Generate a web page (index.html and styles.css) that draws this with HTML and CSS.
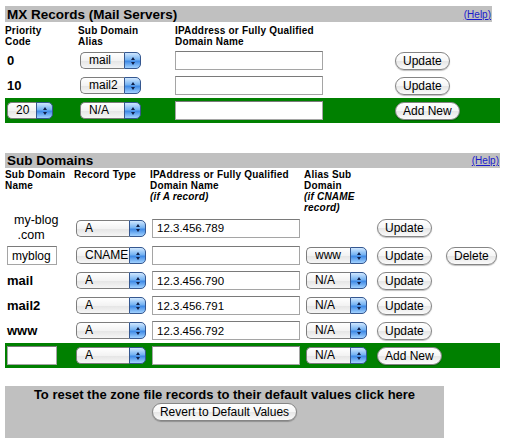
FILE: index.html
```html
<!DOCTYPE html>
<html lang="en">
<head>
    <meta charset="UTF-8">
    <title>Zone File Records</title>
    <link rel="stylesheet" href="styles.css">
</head>
<body>
    <div class="page">
        <div class="bar bar-mx">
            <span class="bar-title">MX Records (Mail Servers)</span>
            <a href="#" class="help">(Help)</a>
        </div>
        <table class="grid mx">
            <colgroup>
                <col class="c-prio"><col class="c-alias"><col class="c-ip"><col class="c-btn">
            </colgroup>
            <tr class="heads">
                <th>Priority<br>Code</th>
                <th>Sub Domain<br>Alias</th>
                <th>IPAddress or Fully Qualified<br>Domain Name</th>
                <th></th>
            </tr>
            <tr>
                <td class="key">0</td>
                <td><span class="sel w61"><select><option>mail</option></select><i class="step"></i></span></td>
                <td><input type="text" class="ip"></td>
                <td><button>Update</button></td>
            </tr>
            <tr>
                <td class="key">10</td>
                <td><span class="sel w61"><select><option>mail2</option></select><i class="step"></i></span></td>
                <td><input type="text" class="ip"></td>
                <td><button>Update</button></td>
            </tr>
            <tr class="new">
                <td><span class="sel w46"><select><option>20</option></select><i class="step"></i></span></td>
                <td><span class="sel w61"><select><option>N/A</option></select><i class="step"></i></span></td>
                <td><input type="text" class="ip"></td>
                <td><button>Add New</button></td>
            </tr>
        </table>

        <div class="bar bar-sub">
            <span class="bar-title">Sub Domains</span>
            <a href="#" class="help">(Help)</a>
        </div>
        <table class="grid sub">
            <colgroup>
                <col class="c-name"><col class="c-type"><col class="c-addr"><col class="c-cname"><col class="c-upd"><col class="c-del">
            </colgroup>
            <tr class="heads">
                <th>Sub Domain<br>Name</th>
                <th>Record Type</th>
                <th>IPAddress or Fully Qualified<br>Domain Name<br><em>(if A record)</em></th>
                <th>Alias Sub<br>Domain<br><em>(if CNAME<br>record)</em></th>
                <th></th>
                <th></th>
            </tr>
            <tr class="tall">
                <td class="host">my-blog<br>&nbsp;.com</td>
                <td><span class="sel w70"><select><option>A</option></select><i class="step"></i></span></td>
                <td><input type="text" class="ip" value="12.3.456.789"></td>
                <td></td>
                <td><button>Update</button></td>
                <td></td>
            </tr>
            <tr>
                <td><input type="text" class="name" value="myblog"></td>
                <td><span class="sel w70"><select><option>CNAME</option></select><i class="step"></i></span></td>
                <td><input type="text" class="ip"></td>
                <td><span class="sel w61"><select><option>www</option></select><i class="step"></i></span></td>
                <td><button>Update</button></td>
                <td><button>Delete</button></td>
            </tr>
            <tr>
                <td class="key">mail</td>
                <td><span class="sel w70"><select><option>A</option></select><i class="step"></i></span></td>
                <td><input type="text" class="ip" value="12.3.456.790"></td>
                <td><span class="sel w61"><select><option>N/A</option></select><i class="step"></i></span></td>
                <td><button>Update</button></td>
                <td></td>
            </tr>
            <tr>
                <td class="key">mail2</td>
                <td><span class="sel w70"><select><option>A</option></select><i class="step"></i></span></td>
                <td><input type="text" class="ip" value="12.3.456.791"></td>
                <td><span class="sel w61"><select><option>N/A</option></select><i class="step"></i></span></td>
                <td><button>Update</button></td>
                <td></td>
            </tr>
            <tr>
                <td class="key">www</td>
                <td><span class="sel w70"><select><option>A</option></select><i class="step"></i></span></td>
                <td><input type="text" class="ip" value="12.3.456.792"></td>
                <td><span class="sel w61"><select><option>N/A</option></select><i class="step"></i></span></td>
                <td><button>Update</button></td>
                <td></td>
            </tr>
            <tr class="new">
                <td><input type="text" class="name"></td>
                <td><span class="sel w70"><select><option>A</option></select><i class="step"></i></span></td>
                <td><input type="text" class="ip"></td>
                <td><span class="sel w61"><select><option>N/A</option></select><i class="step"></i></span></td>
                <td><button>Add New</button></td>
                <td></td>
            </tr>
        </table>

        <div class="reset">
            <p>To reset the zone file records to their default values click here</p>
            <button>Revert to Default Values</button>
        </div>
    </div>
</body>
</html>
```

FILE: styles.css
```css
body {
    margin: 0;
    background: #fff;
    font-family: "Liberation Sans", Arial, sans-serif;
    color: #000;
}

.page {
    padding: 6px 5px 0 5px;
}

/* gray section bars */
.bar {
    display: flex;
    justify-content: space-between;
    align-items: center;
    background-color: #c0c0c0;
    height: 16px;
}

.bar-mx {
    width: 487px;
}

.bar-sub {
    width: 495px;
    margin-top: 30px;
    height: 15px;
}

.bar-title {
    font-size: 13.5px;
    font-weight: bold;
    padding-left: 2px;
    line-height: 15px;
}

.help {
    font-size: 10px;
    color: #1a1acc;
    padding-right: 1px;
}

/* record tables */
.grid {
    border-collapse: collapse;
    table-layout: fixed;
    width: 495px;
}

.grid td,
.grid th {
    padding: 0;
}

.grid td {
    height: 25px;
    vertical-align: middle;
}

.heads th {
    text-align: left;
    vertical-align: top;
    font-size: 10px;
    line-height: 11px;
    letter-spacing: 0.2px;
    font-weight: bold;
    padding-top: 3px;
}

.heads th em {
    font-style: italic;
}

.mx .heads th {
    height: 23px;
}

.sub .heads th {
    height: 44px;
    padding-top: 1px;
}

.c-prio { width: 73px; }
.c-alias { width: 97px; }
.c-ip { width: 220px; }
.c-btn { width: 105px; }

.c-name { width: 69px; }
.c-type { width: 76px; }
.c-addr { width: 154px; }
.c-cname { width: 72px; }
.c-upd { width: 70px; }
.c-del { width: 54px; }

.key {
    font-size: 13px;
    font-weight: bold;
    padding-left: 2px !important;
}

.host {
    font-size: 12.5px;
    line-height: 15px;
    padding-left: 9px !important;
}

.tall td {
    height: 30px;
}

.new td {
    background-color: #008000;
}

/* aqua popup menus */
.sel {
    display: flex;
    height: 17px;
    box-sizing: border-box;
    margin-left: 2px;
}

.w46 { width: 46px; }
.w61 { width: 61px; }
.w70 { width: 70px; }

.sel select {
    -webkit-appearance: none;
    appearance: none;
    flex: 1;
    min-width: 0;
    height: 17px;
    margin: 0;
    padding: 0 0 0 8px;
    border: 1px solid #7d7d7d;
    border-right: none;
    border-radius: 5px 0 0 5px;
    background: linear-gradient(#ffffff, #f3f3f3 50%, #e4e4e4 51%, #f6f6f6);
    font-family: "Liberation Sans", Arial, sans-serif;
    font-size: 12px;
    color: #000;
    line-height: 15px;
}

.step {
    display: flex;
    flex-direction: column;
    align-items: center;
    justify-content: center;
    gap: 2px;
    width: 17px;
    height: 17px;
    box-sizing: border-box;
    border: 1px solid #35578f;
    border-radius: 0 5px 5px 0;
    background: linear-gradient(#cfe7ff, #74b2f2 45%, #3f8ae6 55%, #a2d2ff);
}

.step::before,
.step::after {
    content: "";
    width: 0;
    height: 0;
    border-left: 2.5px solid transparent;
    border-right: 2.5px solid transparent;
}

.step::before {
    border-bottom: 3px solid #10204a;
}

.step::after {
    border-top: 3px solid #10204a;
}

/* text fields */
input {
    display: block;
    box-sizing: border-box;
    height: 19px;
    margin: 0;
    padding: 0 4px;
    border: 1px solid #a5a5a5;
    border-top-color: #7a7a7a;
    background: #fff;
    font-family: "Liberation Sans", Arial, sans-serif;
    font-size: 11.5px;
    color: #000;
}

.ip {
    width: 148px;
}

.sub .ip {
    margin-left: 2px;
}

.name {
    width: 50px;
    margin-left: 2px;
    font-size: 12px;
}

/* aqua push buttons */
button {
    display: block;
    height: 18px;
    margin: 0;
    padding: 0 7px;
    border: 1px solid #858585;
    border-radius: 9px;
    background: linear-gradient(#ffffff, #f6f6f6 50%, #e6e6e6 51%, #fafafa);
    box-shadow: 0 1px 1px rgba(0, 0, 0, 0.25);
    font-family: "Liberation Sans", Arial, sans-serif;
    font-size: 12px;
    line-height: 16px;
    color: #000;
}

.sub td:nth-child(5) button {
    margin-left: 1px;
}

/* reset box */
.reset {
    width: 439px;
    height: 52px;
    margin-top: 18px;
    background-color: #c0c0c0;
    text-align: center;
    box-sizing: border-box;
    padding-top: 1px;
}

.reset p {
    margin: 0;
    font-size: 13px;
    font-weight: bold;
    line-height: 15px;
}

.reset button {
    display: inline-block;
    margin-top: 1px;
}
```
